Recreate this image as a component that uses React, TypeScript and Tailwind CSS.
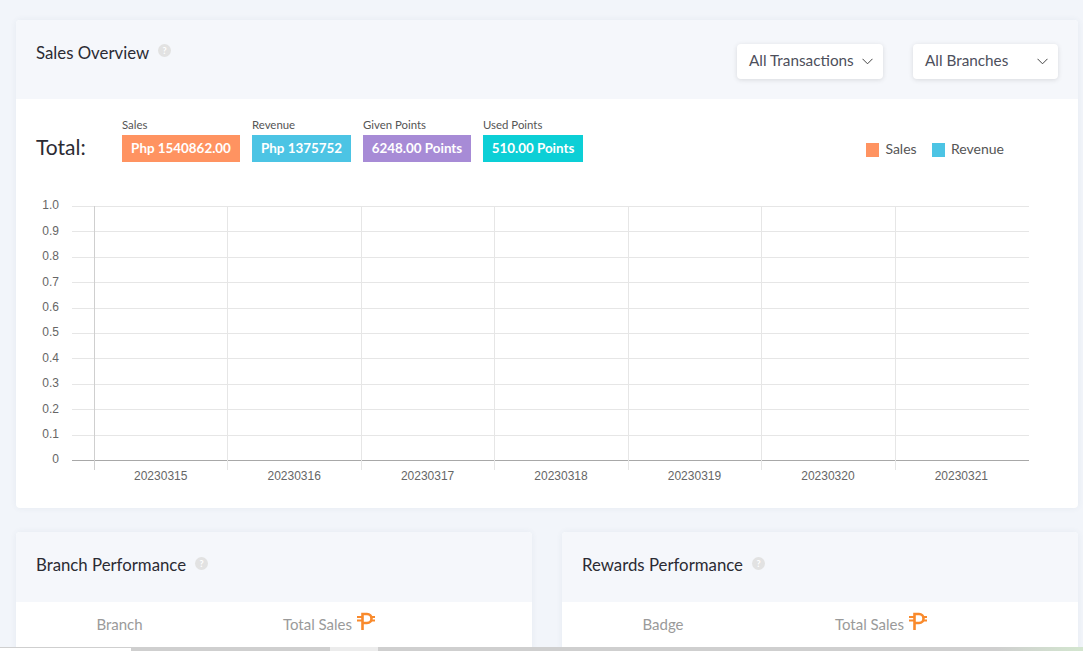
import React from "react";

const card = "rounded-[4px] bg-white shadow-[0_0_6px_rgba(60,80,120,0.07)]";
const font = "font-['Lato','Noto_Sans',sans-serif]";
const chartFont = "font-['Liberation_Sans',Arial,sans-serif]";

const totals = [
    { label: "Sales", value: "Php 1540862.00", color: "bg-[#ff9361]", width: "w-[118px]" },
    { label: "Revenue", value: "Php 1375752", color: "bg-[#4cc4e4]", width: "w-[99px]" },
    { label: "Given Points", value: "6248.00 Points", color: "bg-[#a78bd6]", width: "w-[108px]" },
    { label: "Used Points", value: "510.00 Points", color: "bg-[#0ccfd6]", width: "w-[100px]" },
];

const yTicks = ["1.0", "0.9", "0.8", "0.7", "0.6", "0.5", "0.4", "0.3", "0.2", "0.1", "0"];
const dates = ["20230315", "20230316", "20230317", "20230318", "20230319", "20230320", "20230321"];

const HelpDot = () => (
    <span className="flex h-[13px] w-[13px] items-center justify-center rounded-full bg-[#e2e2e2] text-[9px] font-bold leading-none text-white">
        ?
    </span>
);

// peso sign, the font one is too plain
const Peso = () => (
    <svg width="18" height="18" viewBox="0 0 18 18" fill="none" stroke="#f98a2c" strokeWidth="2.6">
        <path d="M5.5 18V2H10C12.8 2 14.5 4 14.5 6.5C14.5 9 12.8 11 10 11H5.5" />
        <path d="M0 5H5M0 8.5H5M14 5H18M14 8.5H18" strokeWidth="1.8" />
    </svg>
);

const Select = ({ label, width }: { label: string; width: string }) => (
    <div className={`flex h-[35px] items-center justify-between rounded-[4px] bg-white pb-[2px] pl-[12px] pr-[10px] text-[15.3px] text-[#4d4f5c] shadow-[0_1px_5px_rgba(0,0,0,0.12)] ${width}`}>
        <span>{label}</span>
        <svg width="11" height="7" viewBox="0 0 11 7" fill="none" stroke="#444" strokeWidth="1" className="mt-[2px]">
            <path d="M0.5 0.8L5.5 5.8L10.5 0.8" />
        </svg>
    </div>
);

const Chart = () => (
    <div className={`mt-[36px] flex text-[12px] text-[#666] ${chartFont}`}>
        <div className="flex w-[23px] flex-col items-end pt-[0.4px]">
            {yTicks.map((t, i) => (
                <span key={t} className={`${i === yTicks.length - 1 ? "h-[14px]" : "h-[25.4px]"} leading-[14px]`}>
                    {t}
                </span>
            ))}
        </div>
        <div className="ml-[13px] w-[957px]">
            <div className="relative mt-[8px] h-[255px] border-b border-[#a8a8a8]">
                {/* horizontal lines */}
                <div className="flex h-full flex-col">
                    {yTicks.slice(1).map((t) => (
                        <div key={t} className="h-[25.4px] border-t border-[#e6e6e6]" />
                    ))}
                </div>
                {/* vertical lines */}
                <div className="absolute inset-y-0 left-[22px] right-0 flex">
                    {dates.map((d, i) => (
                        <div key={d} className={`h-[264px] w-[133.45px] border-l ${i === 0 ? "border-[#cfcfcf]" : "border-[#e6e6e6]"}`} />
                    ))}
                </div>
            </div>
            <div className="ml-[22px] mt-[8px] flex">
                {dates.map((d) => (
                    <span key={d} className="w-[133.45px] text-center leading-[14px]">{d}</span>
                ))}
            </div>
        </div>
    </div>
);

const TableCard = ({ title, column, colWidth, salesWidth, className }: { title: string; column: string; colWidth: string; salesWidth: string; className: string }) => (
    <div className={`${card} ${className} h-[120px] overflow-hidden`}>
        <div className="flex h-[70px] gap-[9px] bg-[#f5f7fb] pl-[20px] pt-[22px]">
            <h2 className="text-[16.8px] leading-[22px] text-[#2b2b33]">{title}</h2>
            <span className="pt-[3px]"><HelpDot /></span>
        </div>
        <div className="flex h-[44px] items-center text-[15px] text-[#9a9a9a]">
            <span className={`shrink-0 text-center ${colWidth}`}>{column}</span>
            <span className={`flex shrink-0 items-center justify-center gap-[5px] ${salesWidth}`}>
                Total Sales <span className="-mt-[6px]"><Peso /></span>
            </span>
        </div>
    </div>
);

export default function App() {
    return (
        <div className={`relative h-[651px] w-[1083px] overflow-hidden bg-[#f2f5fa] ${font}`}>
            <div className="px-[16px] pt-[20px]">
                <section className={`${card} h-[488px] w-[1062px]`}>
                    <div className="flex h-[79px] items-start justify-between rounded-t-[4px] bg-[#f5f7fb] pl-[20px] pr-[20px]">
                        <div className="flex gap-[9px] pt-[22px]">
                            <h1 className="text-[16.8px] leading-[22px] text-[#2b2b33]">Sales Overview</h1>
                            <span className="pt-[2px]"><HelpDot /></span>
                        </div>
                        <div className="flex gap-[30px] pt-[24px]">
                            <Select label="All Transactions" width="w-[146px]" />
                            <Select label="All Branches" width="w-[145px]" />
                        </div>
                    </div>
                    <div className="px-[20px]">
                        <div className="flex items-start pt-[18px]">
                            <span className="mt-[16px] w-[86px] text-[21px] leading-[28px] text-[#2b2b33]">Total:</span>
                            <div className="flex gap-[12px]">
                                {totals.map((t) => (
                                    <div key={t.label} className={t.width}>
                                        <div className="h-[18px] text-[11.4px] leading-[15px] text-[#555]">{t.label}</div>
                                        <div className={`flex h-[27px] items-center justify-center text-[13.4px] font-bold text-white ${t.color}`}>
                                            {t.value}
                                        </div>
                                    </div>
                                ))}
                            </div>
                            <div className="ml-auto mr-[54px] mt-[23px] flex w-[138px] items-center text-[14px] leading-[16px] text-[#555]">
                                <span className="mr-[6px] mt-[3px] h-[14px] w-[14px] bg-[#ff9361]" />
                                <span className="mr-[15px]">Sales</span>
                                <span className="mr-[6px] mt-[3px] h-[14px] w-[14px] bg-[#4cc4e4]" />
                                <span>Revenue</span>
                            </div>
                        </div>
                        <Chart />
                    </div>
                </section>
                <div className="mt-[24px] flex w-[1062px] gap-[30px]">
                    <TableCard title="Branch Performance" column="Branch" colWidth="w-[207px]" salesWidth="w-[212px]" className="w-[516px]" />
                    <TableCard title="Rewards Performance" column="Badge" colWidth="w-[202px]" salesWidth="w-[234px]" className="w-[516px]" />
                </div>
            </div>
            {/* bottom scrollbar strip */}
            <div className="absolute inset-x-0 bottom-0 flex h-[4px] bg-[linear-gradient(to_right,#cfcfcf_92%,#d3e6cf)]">
                <div className="h-full w-[131px] border-t border-[#cfcfcf] bg-white" />
                <div className="ml-[199px] h-full w-[48px] bg-[#ececec]" />
            </div>
        </div>
    );
}
